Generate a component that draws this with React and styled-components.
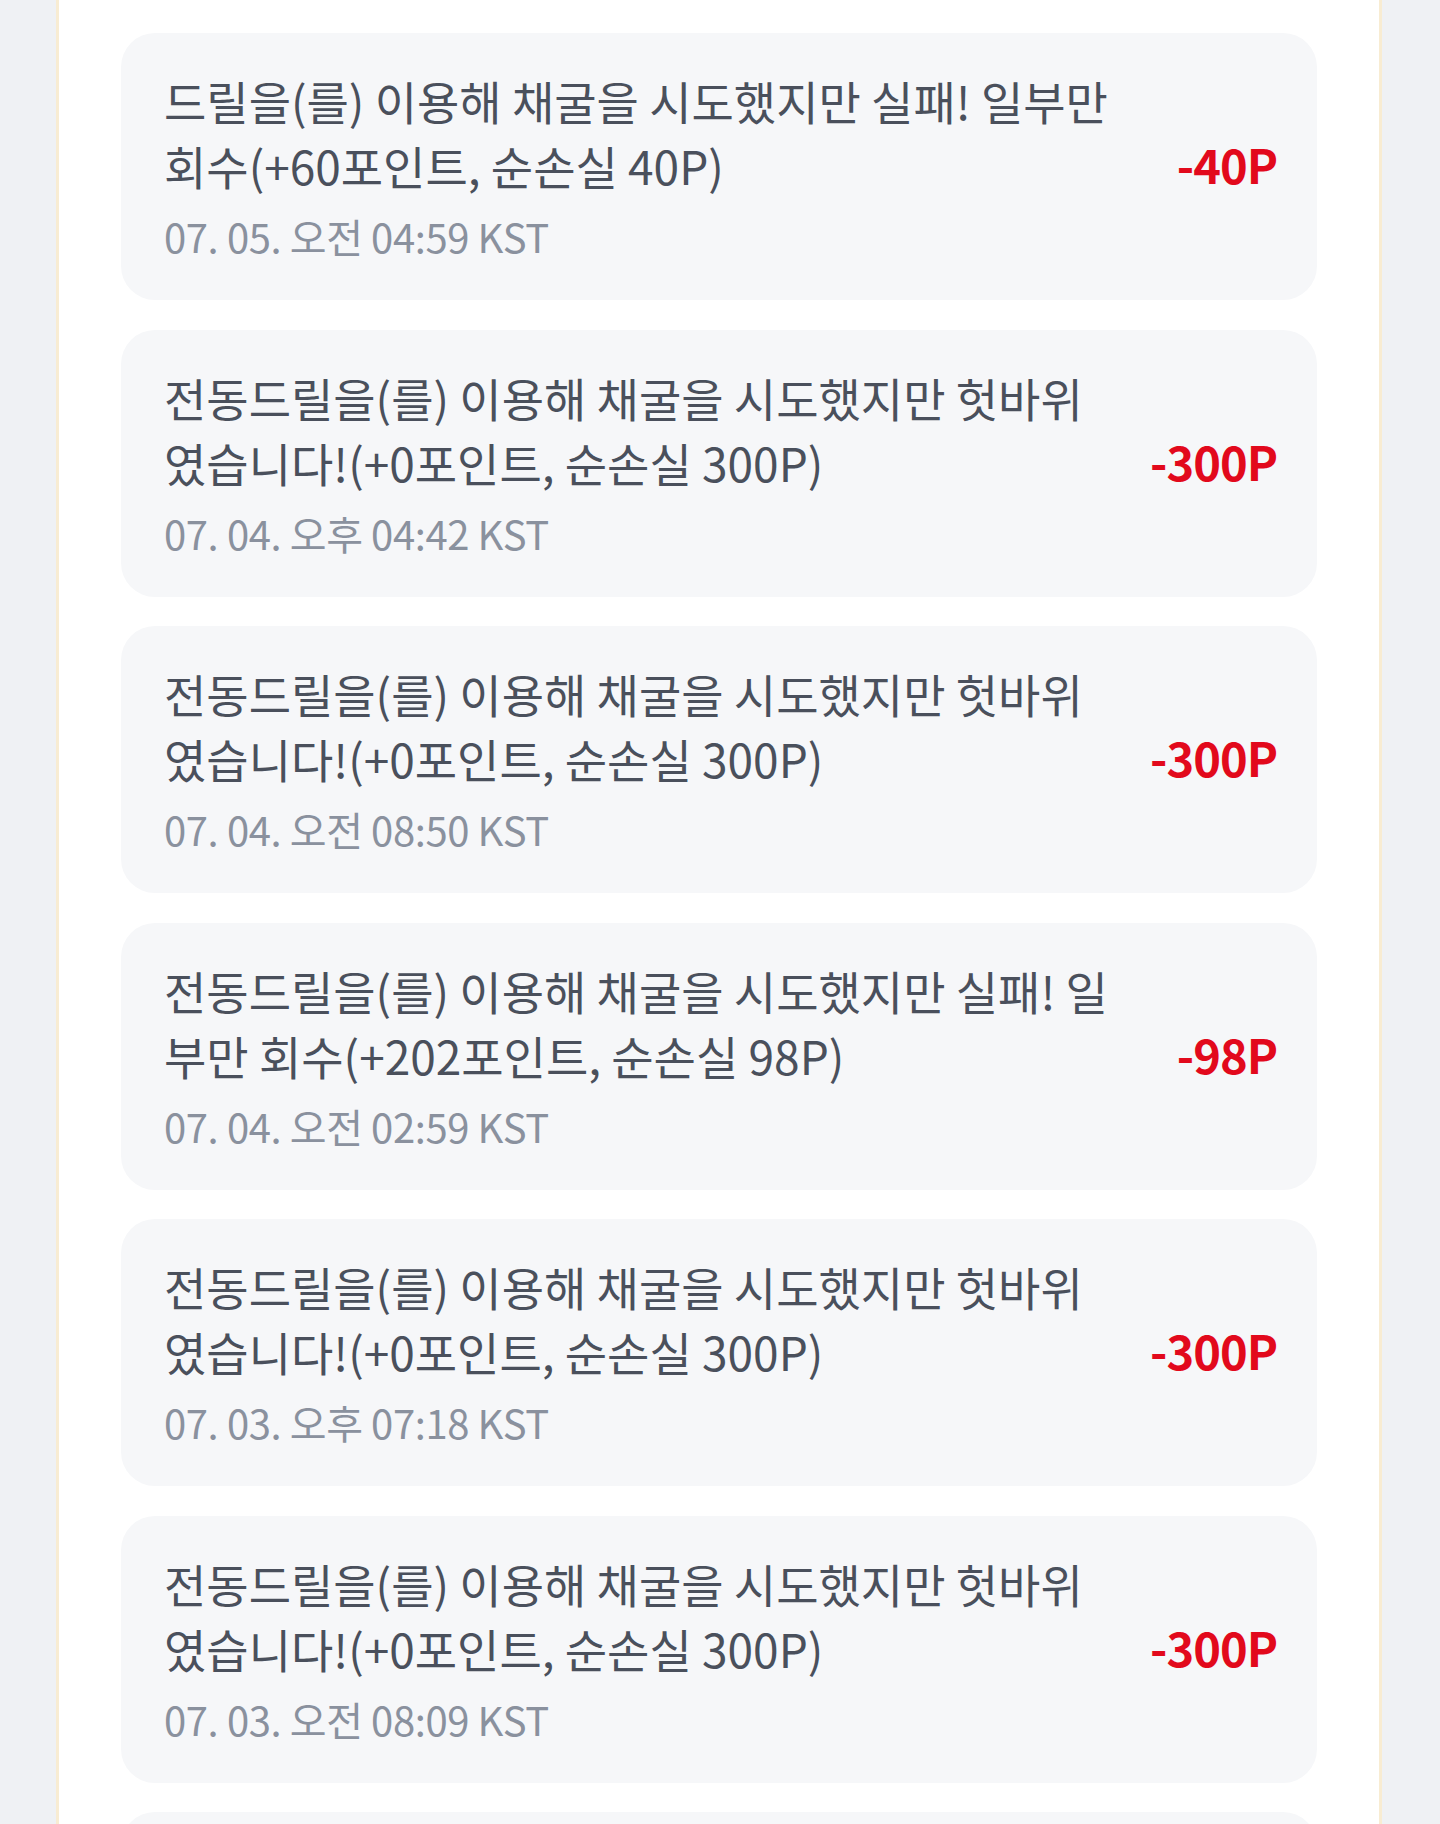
import React from "react";
import styled, { createGlobalStyle } from "styled-components";

const GlobalStyle = createGlobalStyle`
    html, body {
        margin: 0;
        padding: 0;
        background: #eff1f4;
    }
    body {
        font-family: "Noto Sans CJK KR", "Noto Sans", sans-serif;
    }
`;

const HISTORY = [
    {
        message: "드릴을(를) 이용해 채굴을 시도했지만 실패! 일부만 회수(+60포인트, 순손실 40P)",
        date: "07. 05. 오전 04:59 KST",
        amount: -40,
    },
    {
        message: "전동드릴을(를) 이용해 채굴을 시도했지만 헛바위였습니다!(+0포인트, 순손실 300P)",
        date: "07. 04. 오후 04:42 KST",
        amount: -300,
    },
    {
        message: "전동드릴을(를) 이용해 채굴을 시도했지만 헛바위였습니다!(+0포인트, 순손실 300P)",
        date: "07. 04. 오전 08:50 KST",
        amount: -300,
    },
    {
        message: "전동드릴을(를) 이용해 채굴을 시도했지만 실패! 일부만 회수(+202포인트, 순손실 98P)",
        date: "07. 04. 오전 02:59 KST",
        amount: -98,
    },
    {
        message: "전동드릴을(를) 이용해 채굴을 시도했지만 헛바위였습니다!(+0포인트, 순손실 300P)",
        date: "07. 03. 오후 07:18 KST",
        amount: -300,
    },
    {
        message: "전동드릴을(를) 이용해 채굴을 시도했지만 헛바위였습니다!(+0포인트, 순손실 300P)",
        date: "07. 03. 오전 08:09 KST",
        amount: -300,
    },
    {
        message: "전동드릴을(를) 이용해 채굴을 시도했지만 헛바위였습니다!(+0포인트, 순손실 300P)",
        date: "07. 03. 오전 02:11 KST",
        amount: -300,
    },
];

function App() {
    return (
        <>
            <GlobalStyle />
            <Page>
                <Panel>
                    <HistoryList>
                        {HISTORY.map((item, index) => (
                            <HistoryCard key={index}>
                                <Body>
                                    <Message>{item.message}</Message>
                                    <DateText>{item.date}</DateText>
                                </Body>
                                <Amount $negative={item.amount < 0}>
                                    {item.amount > 0 ? `+${item.amount}` : item.amount}P
                                </Amount>
                            </HistoryCard>
                        ))}
                    </HistoryList>
                </Panel>
            </Page>
        </>
    );
}

export default App;

const Page = styled.div`
    display: flex;
    justify-content: center;
    height: 1824px;
    overflow: hidden;
    background: #eff1f4;
`;

const Panel = styled.main`
    width: 1326px;
    margin-left: -2px;
    background: #ffffff;
    border-left: 3px solid #f8ecd2;
    border-right: 3px solid #f8ecd2;
    padding: 33px 62px 0 62px;
    box-sizing: border-box;
`;

const HistoryList = styled.ul`
    list-style: none;
    margin: 0;
    padding: 0;
    display: flex;
    flex-direction: column;
    gap: 29.5px;
`;

const HistoryCard = styled.li`
    display: flex;
    align-items: center;
    min-height: 267px;
    box-sizing: border-box;
    padding: 35px 40px 37px 43px;
    background: #f6f7f9;
    border-radius: 34px;
`;

const Body = styled.div`
    flex: 1;
    max-width: 950px;
    display: flex;
    flex-direction: column;
`;

const Message = styled.p`
    margin: 0;
    font-size: 46px;
    line-height: 65px;
    color: #4a505c;
    word-break: break-all;
`;

const DateText = styled.span`
    margin-top: 11px;
    font-size: 40px;
    line-height: 54px;
    letter-spacing: -0.4px;
    color: #8a919e;
`;

const Amount = styled.strong`
    margin-left: auto;
    margin-bottom: 4px;
    font-size: 47px;
    font-weight: 700;
    letter-spacing: -1px;
    color: ${(props) => (props.$negative ? "#e2091c" : "#2563eb")};
`;
